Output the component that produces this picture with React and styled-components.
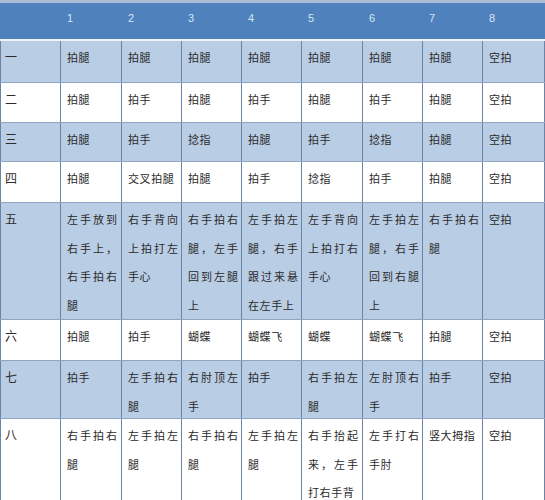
import styled, { createGlobalStyle } from "styled-components";

const GlobalStyle = createGlobalStyle`
  html, body {
    margin: 0;
    padding: 0;
    background: #ffffff;
  }
  body {
    font-family: "Noto Sans CJK SC", "Noto Sans", sans-serif;
  }
`;

const beats = ["1", "2", "3", "4", "5", "6", "7", "8"];

// each cell is a list of lines; a cell with more than one line is spread out like justified text
const rows = [
  { label: "一", height: 42, cells: [["拍腿"], ["拍腿"], ["拍腿"], ["拍腿"], ["拍腿"], ["拍腿"], ["拍腿"], ["空拍"]] },
  { label: "二", height: 40, cells: [["拍腿"], ["拍手"], ["拍腿"], ["拍手"], ["拍腿"], ["拍手"], ["拍腿"], ["空拍"]] },
  { label: "三", height: 39, cells: [["拍腿"], ["拍手"], ["捻指"], ["拍腿"], ["拍手"], ["捻指"], ["拍腿"], ["空拍"]] },
  { label: "四", height: 41, cells: [["拍腿"], ["交叉拍腿"], ["拍腿"], ["拍手"], ["捻指"], ["拍手"], ["拍腿"], ["空拍"]] },
  {
    label: "五",
    height: 117,
    cells: [
      ["左手放到", "右手上，", "右手拍右", "腿"],
      ["右手背向", "上拍打左", "手心"],
      ["右手拍右", "腿，左手", "回到左腿", "上"],
      ["左手拍左", "腿，右手", "跟过来悬", "在左手上"],
      ["左手背向", "上拍打右", "手心"],
      ["左手拍左", "腿，右手", "回到右腿", "上"],
      ["右手拍右", "腿"],
      ["空拍"],
    ],
  },
  { label: "六", height: 41, cells: [["拍腿"], ["拍手"], ["蝴蝶"], ["蝴蝶飞"], ["蝴蝶"], ["蝴蝶飞"], ["拍腿"], ["空拍"]] },
  {
    label: "七",
    height: 58,
    cells: [["拍手"], ["左手拍右", "腿"], ["右肘顶左", "手"], ["拍手"], ["右手拍左", "腿"], ["左肘顶右", "手"], ["拍手"], ["空拍"]],
  },
  {
    label: "八",
    height: 100,
    cells: [
      ["右手拍右", "腿"],
      ["左手拍左", "腿"],
      ["右手拍右", "腿"],
      ["左手拍左", "腿"],
      ["右手抬起", "来，左手", "打右手背"],
      ["左手打右", "手肘"],
      ["竖大拇指"],
      ["空拍"],
    ],
  },
];

export default function App() {
  return (
    <>
      <GlobalStyle />
      <Table>
        <HeadRow>
          <HeadCell />
          {beats.map((b) => (
            <HeadCell key={b}>{b}</HeadCell>
          ))}
        </HeadRow>
        {rows.map((row, i) => (
          <Row key={row.label} $shaded={i % 2 === 0} $height={row.height}>
            <LabelCell>{row.label}</LabelCell>
            {row.cells.map((lines, j) => (
              <Cell key={j}>
                {lines.map((line, k) => (
                  <Line key={k} $spread={lines.length > 1 && k < lines.length - 1}>
                    {line}
                  </Line>
                ))}
              </Cell>
            ))}
          </Row>
        ))}
      </Table>
    </>
  );
}

const columns = "61px 61px 60px 60px 60px 61px 60px 60px 62px";

const Table = styled.div`
  width: 545px;
  height: 500px;
  overflow: hidden;
  display: flex;
  flex-direction: column;
`;

const HeadRow = styled.div`
  display: grid;
  grid-template-columns: ${columns};
  height: 41px;
  flex-shrink: 0;
  box-sizing: border-box;
  border-top: 3px solid #a9bdd6;
  border-bottom: 2px solid #eef3f9;
  background: #4f81bd;
`;

const HeadCell = styled.div`
  padding: 9px 0 0 6px;
  font-family: "Liberation Sans", Arial, sans-serif;
  font-size: 11px;
  color: #d6e4f4;
`;

const Row = styled.div`
  display: grid;
  grid-template-columns: ${columns};
  height: ${(p) => p.$height}px;
  flex-shrink: 0;
  box-sizing: border-box;
  border-bottom: 1px solid #8ea4c0;
  background: ${(p) => (p.$shaded ? "#b9cde5" : "#ffffff")};
`;

const Cell = styled.div`
  padding: 2px 0 0 6px;
  border-right: 1px solid #6b84a6;
  font-size: 11px;
  line-height: 28.5px;
  color: #2b2b2b;
  white-space: nowrap;
  overflow: hidden;
`;

const LabelCell = styled(Cell)`
  padding-left: 4px;
  border-left: 1px solid #6b84a6;
  font-size: 12px;
`;

const Line = styled.div`
  letter-spacing: ${(p) => (p.$spread ? "2px" : "0.6px")};
`;
